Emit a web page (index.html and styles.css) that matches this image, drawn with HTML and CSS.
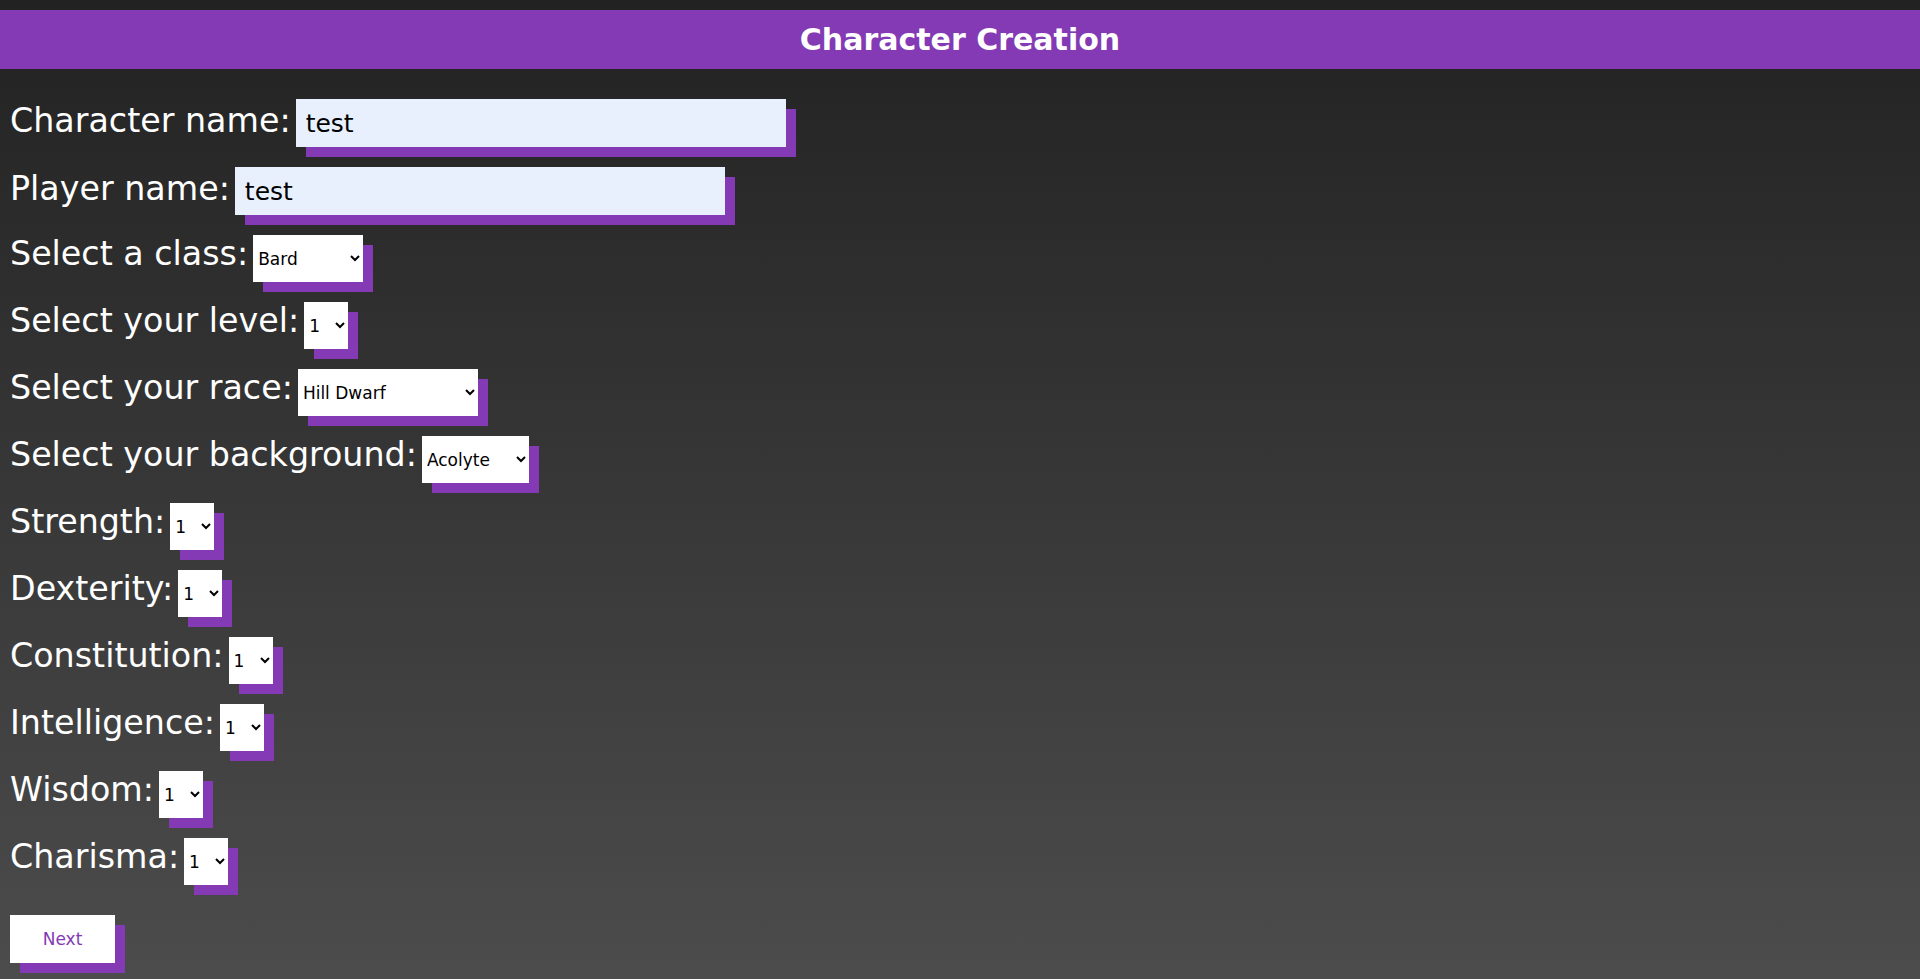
FILE: index.html
```html
<!DOCTYPE html>
<html lang="en">
<head>
<meta charset="utf-8">
<title>Character Creation</title>
<link rel="stylesheet" href="styles.css">
</head>
<body>
<header class="topbar">
  <h1 class="title">Character Creation</h1>
</header>
<form class="char-form">
  <div class="row">
    <label class="lbl" for="cname">Character name:</label>
    <input id="cname" class="text-in" type="text" value="test">
  </div>
  <div class="row">
    <label class="lbl" for="pname">Player name:</label>
    <input id="pname" class="text-in" type="text" value="test">
  </div>
  <div class="row">
    <label class="lbl" for="cls">Select a class:</label>
    <select id="cls" class="pick pick-class"><option>Bard</option><option>Barbarian</option><option>Cleric</option><option>Druid</option><option>Fighter</option><option>Monk</option><option>Paladin</option><option>Ranger</option><option>Rogue</option><option>Sorcerer</option><option>Warlock</option><option>Wizard</option></select>
  </div>
  <div class="row">
    <label class="lbl" for="lvl">Select your level:</label>
    <select id="lvl" class="pick pick-num"><option>1</option><option>2</option><option>3</option><option>4</option><option>5</option></select>
  </div>
  <div class="row">
    <label class="lbl" for="race">Select your race:</label>
    <select id="race" class="pick pick-race"><option>Hill Dwarf</option><option>Mountain Dwarf</option><option>High Elf</option><option>Wood Elf</option><option>Human</option></select>
  </div>
  <div class="row">
    <label class="lbl" for="bg">Select your background:</label>
    <select id="bg" class="pick pick-bg"><option>Acolyte</option><option>Criminal</option><option>Folk Hero</option><option>Noble</option><option>Sage</option><option>Soldier</option></select>
  </div>
  <div class="row">
    <label class="lbl" for="str">Strength:</label>
    <select id="str" class="pick pick-num"><option>1</option><option>2</option><option>3</option></select>
  </div>
  <div class="row">
    <label class="lbl" for="dex">Dexterity:</label>
    <select id="dex" class="pick pick-num"><option>1</option><option>2</option><option>3</option></select>
  </div>
  <div class="row">
    <label class="lbl" for="con">Constitution:</label>
    <select id="con" class="pick pick-num"><option>1</option><option>2</option><option>3</option></select>
  </div>
  <div class="row">
    <label class="lbl" for="int">Intelligence:</label>
    <select id="int" class="pick pick-num"><option>1</option><option>2</option><option>3</option></select>
  </div>
  <div class="row">
    <label class="lbl" for="wis">Wisdom:</label>
    <select id="wis" class="pick pick-num"><option>1</option><option>2</option><option>3</option></select>
  </div>
  <div class="row">
    <label class="lbl" for="cha">Charisma:</label>
    <select id="cha" class="pick pick-num"><option>1</option><option>2</option><option>3</option></select>
  </div>
  <div class="actions">
    <button class="next-btn" type="button">Next</button>
  </div>
</form>
</body>
</html>
```
FILE: styles.css
```css
html, body {
  margin: 0;
  padding: 0;
}

body {
  min-height: 979px;
  background: linear-gradient(to bottom, #222222 0%, #4c4c4c 100%);
  font-family: "DejaVu Sans", "Liberation Sans", sans-serif;
  color: #ffffff;
  overflow: hidden;
}

.topbar {
  margin-top: 10px;
  height: 59px;
  background: #833ab4;
  display: flex;
  align-items: center;
  justify-content: center;
}

.title {
  margin: 0;
  font-size: 30px;
  font-weight: 700;
  color: #ffffff;
  line-height: 1;
}

.char-form {
  padding: 30px 10px 0 10px;
}

.row {
  display: flex;
  align-items: baseline;
  gap: 5px;
  margin-bottom: 20px;
}

.lbl {
  font-size: 33.3px;
  line-height: 1;
  color: #ffffff;
  white-space: nowrap;
}

.text-in {
  box-sizing: border-box;
  width: 490px;
  height: 48px;
  border: none;
  outline: none;
  margin: 0;
  padding: 0 10px;
  background: #e8f0fe;
  color: #000000;
  font-family: "DejaVu Sans", "Liberation Sans", sans-serif;
  font-size: 25px;
  box-shadow: 10px 10px 0 #833ab4;
}

.pick {
  box-sizing: border-box;
  height: 47px;
  margin: 0;
  border: none;
  border-radius: 0;
  padding: 0 2px 0 1px;
  background-color: #ffffff;
  color: #000000;
  font-family: "DejaVu Sans", "Liberation Sans", sans-serif;
  font-size: 17px;
  box-shadow: 10px 10px 0 #833ab4;
}

.pick-class { width: 110px; }
.pick-num { width: 44px; }
.pick-race { width: 180px; }
.pick-bg { width: 107px; }

.actions {
  padding-top: 10px;
}

.next-btn {
  width: 105px;
  height: 48px;
  border: none;
  border-radius: 0;
  margin: 0;
  background: #ffffff;
  color: #833ab4;
  font-family: "DejaVu Sans", "Liberation Sans", sans-serif;
  font-size: 17px;
  box-shadow: 10px 10px 0 #833ab4;
  cursor: pointer;
}
```
